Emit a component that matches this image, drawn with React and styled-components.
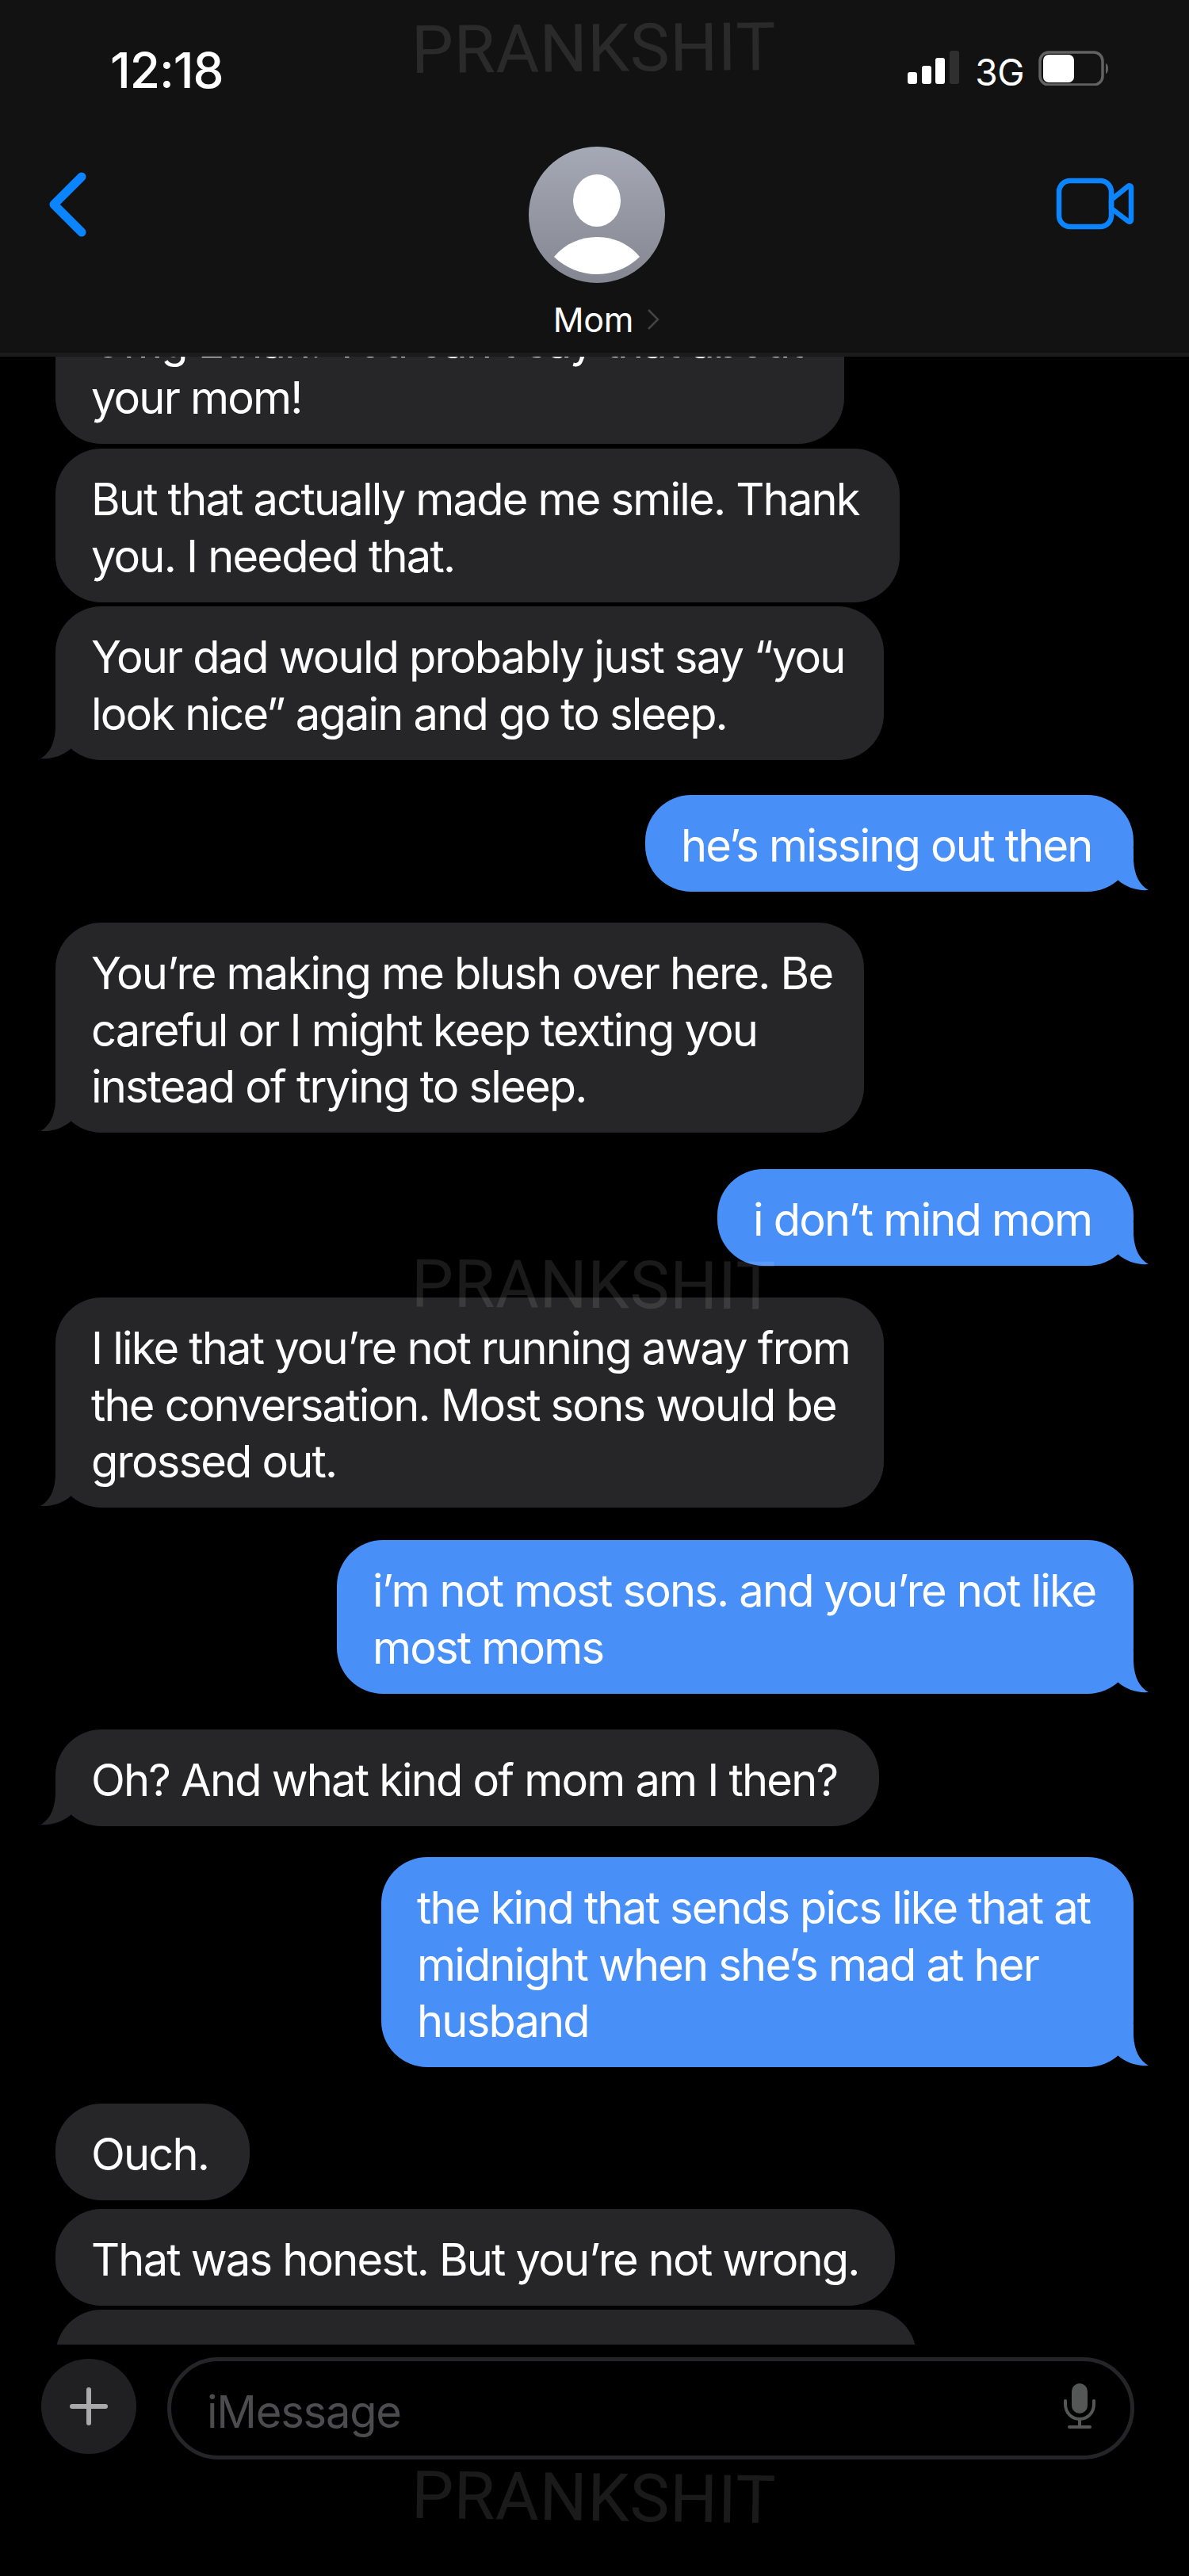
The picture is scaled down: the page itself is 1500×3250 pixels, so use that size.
import React from 'react'
import styled, { createGlobalStyle } from 'styled-components'

const GlobalStyle = createGlobalStyle`
    * { box-sizing: border-box; }
    html, body { margin: 0; padding: 0; background: #000; }
    body { font-family: "Inter", "Liberation Sans", sans-serif; color: #fff; }
`

const Page = styled.div`
    position: relative;
    width: 1500px;
    height: 3250px;
    display: flex;
    flex-direction: column;
    background: #000;
    overflow: hidden;
`

const Watermark = styled.div`
    position: absolute;
    left: 519px;
    top: ${(props) => props.$top}px;
    width: 456px;
    font-family: "Roboto", sans-serif;
    font-weight: 400;
    font-size: 84px;
    line-height: 84px;
    letter-spacing: 0.7px;
    white-space: nowrap;
    color: rgba(255, 255, 255, 0.1);
    transform: rotate(${(props) => props.$tilt}deg);
    pointer-events: none;
    z-index: 5;
`

const Header = styled.header`
    height: 450px;
    flex: none;
    background: #121212;
    border-bottom: 5px solid #1b1b1b;
    display: flex;
    flex-direction: column;
`

const StatusBar = styled.div`
    height: 130px;
    padding: 57px 100px 0 139px;
    display: flex;
    justify-content: space-between;
    align-items: flex-start;
`

const Time = styled.div`
    font-size: 62px;
    line-height: 64px;
    font-weight: 500;
    letter-spacing: -1px;
`

const StatusIcons = styled.div`
    display: flex;
    align-items: flex-start;
    padding-top: 7px;
`

const Network = styled.div`
    font-size: 46px;
    line-height: 50px;
    margin: 2px 18px 0 20px;
    letter-spacing: -0.5px;
`

const Nav = styled.nav`
    position: relative;
    display: flex;
    justify-content: space-between;
    align-items: flex-start;
    padding: 0 68px 0 58px;
`

const BackIcon = styled.svg`
    width: 60px;
    height: 90px;
    margin-top: 83px;
    display: block;
`

const VideoIcon = styled.svg`
    width: 100px;
    height: 66px;
    margin-top: 94px;
    display: block;
`

const Contact = styled.div`
    position: absolute;
    left: 0;
    right: 0;
    top: 55px;
    display: flex;
    flex-direction: column;
    align-items: center;
`

const Avatar = styled.svg`
    width: 172px;
    height: 172px;
    margin-right: -6px;
    display: block;
`

const ContactName = styled.div`
    display: flex;
    align-items: center;
    gap: 17px;
    margin-top: 20px;
    margin-left: 30px;
    font-size: 43px;
    line-height: 52px;
    letter-spacing: -0.3px;
`

const ContactChevron = styled.svg`
    width: 16px;
    height: 28px;
    display: block;
`

const Messages = styled.main`
    height: 2508px;
    flex: none;
    padding: 0 70px;
    overflow: hidden;
    display: flex;
    flex-direction: column;
`

const Bubble = styled.div`
    position: relative;
    flex: none;
    width: ${(props) => props.$width}px;
    margin-top: ${(props) => props.$gap}px;
    align-self: ${(props) => (props.$sent ? 'flex-end' : 'flex-start')};
    padding: 29px 20px 21.5px 45px;
    border-radius: 58px;
    background: ${(props) => (props.$sent ? '#488ff8' : '#262628')};
    font-size: 56px;
    line-height: 71.5px;
    letter-spacing: -1.8px;
    white-space: pre;
    min-height: 122px;
`

const Tail = styled.svg`
    position: absolute;
    bottom: 0;
    width: 50px;
    height: 55px;
    display: block;
    ${(props) => (props.$sent ? 'right: -20px;' : 'left: -20px; transform: scaleX(-1);')}
    fill: ${(props) => (props.$sent ? '#488ff8' : '#262628')};
`

const Composer = styled.div`
    height: 129px;
    flex: none;
    margin-top: 16px;
    padding: 0 69px 0 52px;
    display: flex;
    align-items: center;
    gap: 39px;
`

const PlusButton = styled.div`
    width: 120px;
    height: 120px;
    flex: none;
    margin-top: -5px;
    border-radius: 50%;
    background: #201f21;
    display: flex;
    align-items: center;
    justify-content: center;
`

const PlusIcon = styled.svg`
    width: 48px;
    height: 48px;
    display: block;
`

const InputBox = styled.div`
    flex: 1;
    height: 129px;
    border: 5px solid #252527;
    border-radius: 65px;
    padding: 0 44px 6px 45px;
    display: flex;
    align-items: center;
    justify-content: space-between;
`

const Placeholder = styled.div`
    font-size: 56px;
    line-height: 70px;
    margin-top: 14px;
    letter-spacing: -1.2px;
    color: #4c4c4e;
`

const MicIcon = styled.svg`
    width: 40px;
    height: 58px;
    display: block;
`

const messages = [
    { text: 'Omg Ethan! You can’t say that about\nyour mom!', width: 995, gap: -83.5 },
    { text: 'But that actually made me smile. Thank\nyou. I needed that.', width: 1065, gap: 6 },
    { text: 'Your dad would probably just say “you\nlook nice” again and go to sleep.', width: 1045, gap: 5.5, tail: true },
    { text: 'he’s missing out then', width: 616, gap: 44.5, sent: true, tail: true },
    { text: 'You’re making me blush over here. Be\ncareful or I might keep texting you\ninstead of trying to sleep.', width: 1020, gap: 39, tail: true },
    { text: 'i don’t mind mom', width: 525, gap: 46, sent: true, tail: true },
    { text: 'I like that you’re not running away from\nthe conversation. Most sons would be\ngrossed out.', width: 1045, gap: 40, tail: true },
    { text: 'i’m not most sons. and you’re not like\nmost moms', width: 1005, gap: 41, sent: true, tail: true },
    { text: 'Oh? And what kind of mom am I then?', width: 1039, gap: 45.5, tail: true },
    { text: 'the kind that sends pics like that at\nmidnight when she’s mad at her\nhusband', width: 949, gap: 39, sent: true, tail: true },
    { text: 'Ouch.', width: 245, gap: 46 },
    { text: 'That was honest. But you’re not wrong.', width: 1059, gap: 11 },
    { text: '', width: 1086, gap: 5 },
]

const App = () => {
    return (
        <Page>
            <GlobalStyle />
            <Watermark $top={20} $tilt={-0.5}>PRANKSHIT</Watermark>
            <Watermark $top={1580} $tilt={0.4}>PRANKSHIT</Watermark>
            <Watermark $top={3110} $tilt={0.8}>PRANKSHIT</Watermark>
            <Header>
                <StatusBar>
                    <Time>12:18</Time>
                    <StatusIcons>
                        <svg width="65" height="44" viewBox="0 0 65 44">
                            <rect x="0" y="27" width="12" height="15" rx="3" fill="#fff" />
                            <rect x="18" y="19" width="12" height="23" rx="3" fill="#fff" />
                            <rect x="35" y="9" width="12" height="33" rx="3" fill="#fff" />
                            <rect x="53" y="0" width="12" height="42" rx="3" fill="#2f2f2f" />
                        </svg>
                        <Network>3G</Network>
                        <svg width="90" height="44" viewBox="0 0 90 44">
                            <rect x="2" y="2" width="79" height="41" rx="11" fill="none" stroke="#626262" strokeWidth="3.5" />
                            <rect x="6" y="5" width="39" height="35" rx="7" fill="#fff" />
                            <path d="M85 16 C89 17 89 28 85 29 Z" fill="#626262" />
                        </svg>
                    </StatusIcons>
                </StatusBar>
                <Nav>
                    <BackIcon viewBox="0 0 60 90">
                        <path d="M45 10 L10 45 L45 80" fill="none" stroke="#0a84ff" strokeWidth="11" strokeLinecap="round" strokeLinejoin="round" />
                    </BackIcon>
                    <Contact>
                        <Avatar viewBox="0 0 172 172">
                            <defs>
                                <linearGradient id="avatarFill" x1="0" y1="0" x2="0" y2="1">
                                    <stop offset="0" stopColor="#a5a9b5" />
                                    <stop offset="1" stopColor="#848791" />
                                </linearGradient>
                            </defs>
                            <circle cx="86" cy="86" r="86" fill="url(#avatarFill)" />
                            <ellipse cx="86" cy="68" rx="30" ry="33" fill="#fff" />
                            <path d="M32 139 C46 122 66 114 86 114 C106 114 126 122 140 139 C126 153 106 161 86 161 C66 161 46 153 32 139 Z" fill="#fff" />
                        </Avatar>
                        <ContactName>
                            Mom
                            <ContactChevron viewBox="0 0 16 28">
                                <path d="M2 2 L14 14 L2 26" fill="none" stroke="#444446" strokeWidth="2.5" />
                            </ContactChevron>
                        </ContactName>
                    </Contact>
                    <VideoIcon viewBox="0 0 100 66">
                        <rect x="4" y="4" width="66" height="58" rx="14" fill="none" stroke="#0a84ff" strokeWidth="6.5" />
                        <path d="M70 28 L91 11 C93 9.500 95 10.500 95 13 L95 53 C95 55.500 93 56.500 91 55 L70 39 Z" fill="none" stroke="#0a84ff" strokeWidth="6.5" strokeLinejoin="round" />
                    </VideoIcon>
                </Nav>
            </Header>
            <Messages>
                {messages.map((msg, i) => (
                    <Bubble key={i} $sent={msg.sent} $width={msg.width} $gap={msg.gap}>
                        {msg.text}
                        {msg.tail && (
                            <Tail $sent={msg.sent} viewBox="0 0 50 55">
                                <path d="M30 0 L30 15 C31 35 38 47 49 53 C35 54 21 50 10 40 L0 30 Z" />
                            </Tail>
                        )}
                    </Bubble>
                ))}
            </Messages>
            <Composer>
                <PlusButton>
                    <PlusIcon viewBox="0 0 48 48">
                        <path d="M24 3 V45 M3 24 H45" stroke="#a9a9ab" strokeWidth="6" strokeLinecap="round" />
                    </PlusIcon>
                </PlusButton>
                <InputBox>
                    <Placeholder>iMessage</Placeholder>
                    <MicIcon viewBox="0 0 40 58">
                        <rect x="10" y="0" width="20" height="38" rx="10" fill="#555656" />
                        <path d="M2 22 V26 C2 37 10 45 20 45 C30 45 38 37 38 26 V22" fill="none" stroke="#555656" strokeWidth="4" strokeLinecap="round" />
                        <path d="M20 45 V55 M7 55 H33" fill="none" stroke="#555656" strokeWidth="4" strokeLinecap="round" />
                    </MicIcon>
                </InputBox>
            </Composer>
        </Page>
    )
}

export default App
